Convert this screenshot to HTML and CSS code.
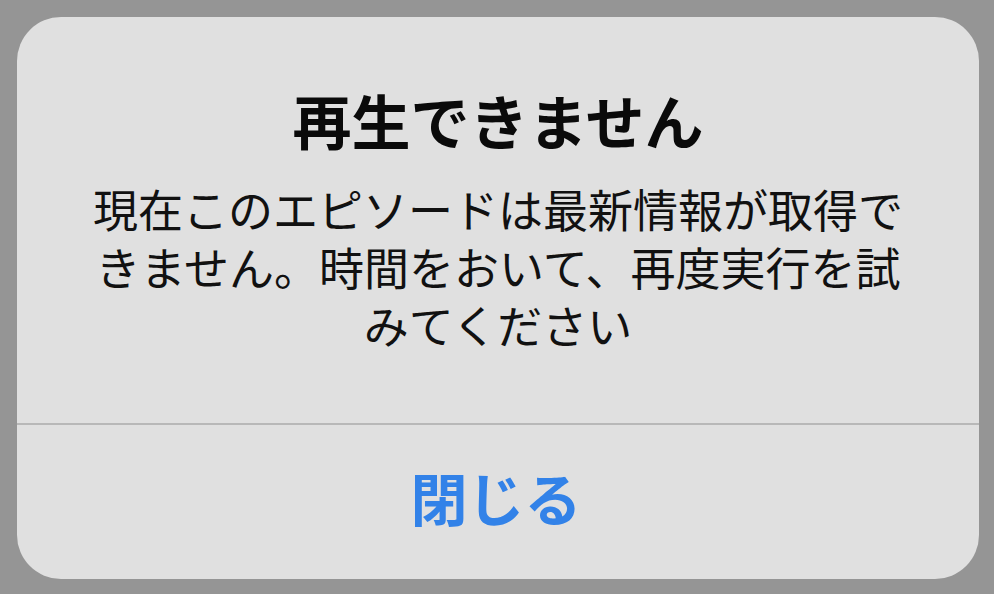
FILE: index.html
```html
<!DOCTYPE html>
<html lang="ja">
<head>
<meta charset="utf-8">
<link rel="stylesheet" href="styles.css">
</head>
<body>
<div class="screen">
  <div class="dialog">
    <div class="content">
      <div class="title">再生できません</div>
      <div class="message">現在このエピソードは最新情報が取得できません。時間をおいて、再度実行を試みてください</div>
    </div>
    <div class="divider"></div>
    <div class="actions">
      <div class="button">閉じる</div>
    </div>
  </div>
</div>
</body>
</html>
```
FILE: styles.css
```css
html, body {
  margin: 0;
  padding: 0;
}
body {
  width: 994px;
  height: 594px;
  background: #959595;
  font-family: "Noto Sans CJK JP", "Noto Sans", sans-serif;
  overflow: hidden;
}
.screen {
  padding: 17px 16px 15px 17px;
  height: 594px;
  box-sizing: border-box;
}
.dialog {
  width: 962px;
  height: 562px;
  background: #e0e0e0;
  border-radius: 44px;
  display: flex;
  flex-direction: column;
  overflow: hidden;
}
.content {
  padding-top: 68px;
  height: 333px;
  box-sizing: border-box;
  display: flex;
  flex-direction: column;
  align-items: center;
}
.title {
  font-size: 59px;
  font-weight: 700;
  line-height: 70px;
  color: #0a0a0a;
  text-align: center;
}
.message {
  margin-top: 25px;
  width: 822px;
  font-size: 45px;
  line-height: 58px;
  color: #111;
  text-align: center;
}
.divider {
  height: 2px;
  background: #b8b8b8;
  margin-top: 73px;
}
.actions {
  flex: 1;
  display: flex;
  align-items: center;
  justify-content: center;
}
.button {
  font-size: 57px;
  font-weight: 700;
  color: #3282e8;
  line-height: 70px;
  margin-top: -12px;
  margin-left: -4px;
}
```
